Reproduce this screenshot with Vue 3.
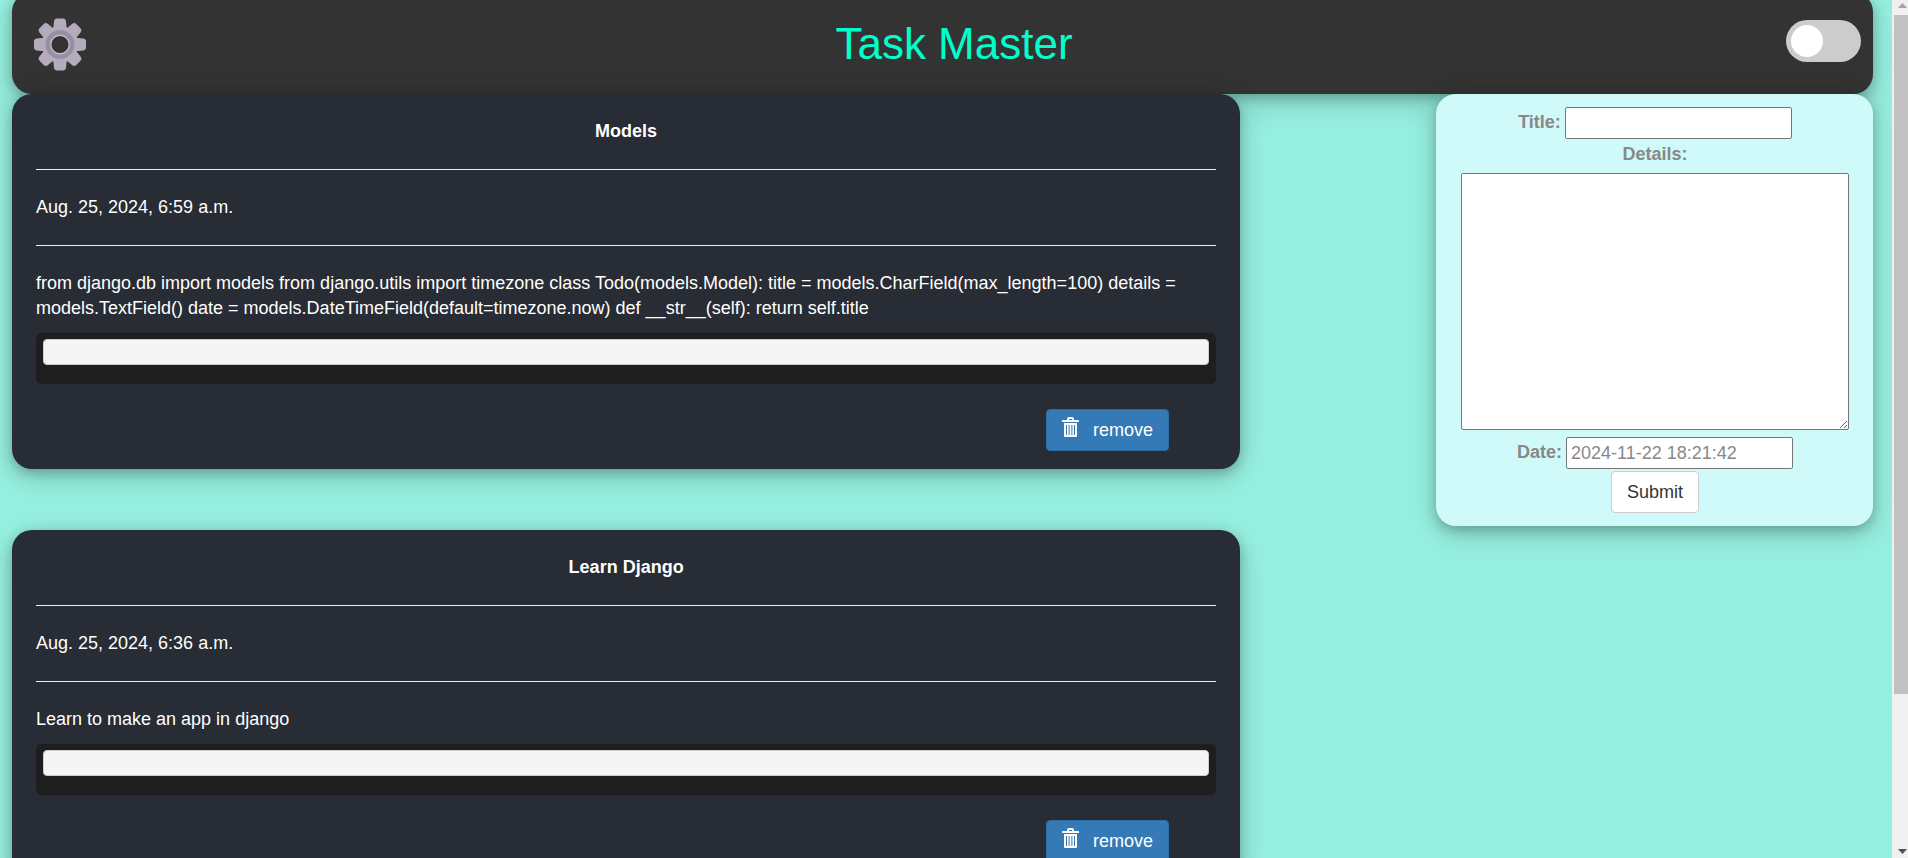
<script setup>
import { ref } from 'vue'

const todos = [
  {
    title: 'Models',
    date: 'Aug. 25, 2024, 6:59 a.m.',
    details:
      'from django.db import models from django.utils import timezone class Todo(models.Model): title = models.CharField(max_length=100) details = models.TextField() date = models.DateTimeField(default=timezone.now) def __str__(self): return self.title',
  },
  {
    title: 'Learn Django',
    date: 'Aug. 25, 2024, 6:36 a.m.',
    details: 'Learn to make an app in django',
  },
]
const teeth = [0, 45, 90, 135, 180, 225, 270, 315]
const light = ref(false)
const title = ref('')
const details = ref('')
const date = ref('2024-11-22 18:21:42')
</script>

<template>
  <div class="window">
    <div class="page">
      <header class="topbar">
        <div class="settings">
          <button class="gear" type="button" aria-label="Settings">
            <svg width="52" height="53" viewBox="-26 -26.500 52 53" aria-hidden="true">
              <g fill="#b4abbc">
                <path
                  v-for="a in teeth"
                  :key="a"
                  :transform="`rotate(${a})`"
                  d="M-7 -14 L-6 -23 Q-5.600 -26 -3 -26 H3 Q5.600 -26 6 -23 L7 -14 Z"
                />
              </g>
              <circle r="14" fill="none" stroke="#b4abbc" stroke-width="8" />
              <circle r="12" fill="none" stroke="#998fa5" stroke-width="5" />
              <circle r="9.300" fill="none" stroke="#c6bbd0" stroke-width="1.400" />
            </svg>
          </button>
        </div>
        <h1>Task Master</h1>
        <label class="switch">
          <input v-model="light" type="checkbox" aria-label="Switch theme" />
          <span class="slider"></span>
        </label>
      </header>

      <div class="columns">
        <main class="todos">
          <article v-for="t in todos" :key="t.title" class="card">
            <h2>{{ t.title }}</h2>
            <hr />
            <p>{{ t.date }}</p>
            <hr />
            <p>{{ t.details }}</p>
            <div class="code"><pre></pre></div>
            <div class="actions">
              <button class="btn primary" type="button">
                <svg width="17" height="20" viewBox="0 0 17 20" aria-hidden="true">
                  <path
                    fill="#fff"
                    fill-rule="evenodd"
                    d="M0 5 V4 Q0 3 1 3 H5 V2 Q5 0 7 0 H10 Q12 0 12 2 V3 H16 Q17 3 17 4 V5 Z M7 2 V3 H10 V2 Z M2 6 H15 V19 Q15 20 14 20 H3 Q2 20 2 19 Z M4 8 V18 H5 V8 Z M6.600 8 V18 H7.600 V8 Z M9.400 8 V18 H10.400 V8 Z M12 8 V18 H13 V8 Z"
                  />
                </svg>
                remove
              </button>
            </div>
          </article>
        </main>

        <form class="entry" @submit.prevent>
          <div class="row">
            <label for="title">Title:</label>
            <input id="title" v-model="title" type="text" />
          </div>
          <label for="details">Details:</label>
          <textarea id="details" v-model="details"></textarea>
          <div class="row">
            <label for="date">Date:</label>
            <input id="date" v-model="date" type="text" />
          </div>
          <button class="btn" type="submit">Submit</button>
        </form>
      </div>
    </div>

    <div class="scrollbar" aria-hidden="true">
      <svg width="14" height="15" viewBox="0 0 14 15"><path d="M4 8 L8.500 3 L13 8 Z" fill="#a3a3a3" /></svg>
      <div class="track"><div class="thumb"></div></div>
      <svg width="14" height="15" viewBox="0 0 14 15"><path d="M4 6 L8.500 11 L13 6 Z" fill="#505050" /></svg>
    </div>
  </div>
</template>

<style>
body {
  background: #96f0e0;
  overflow: hidden;
}
</style>

<style scoped>
* {
  box-sizing: border-box;
}
.window {
  display: flex;
  height: 100vh;
  font: 18px/25px "Liberation Sans", Arial, sans-serif;
}
.page {
  flex: 1;
  overflow: hidden;
  padding: 0 19px 0 12px;
}
.topbar,
.card,
.entry {
  border-radius: 20px;
  box-shadow: 0 4px 12px rgba(0, 0, 0, 0.24), 0 8px 32px rgba(0, 0, 0, 0.18);
}
.topbar {
  display: flex;
  justify-content: space-between;
  align-items: flex-start;
  height: 102px;
  margin-top: -8px;
  padding: 26px 12px 0;
  background: #333;
}
.settings {
  width: 98px;
  padding-left: 10px;
}
.gear {
  display: block;
  padding: 0;
  border: 0;
  background: none;
}
.gear svg {
  display: block;
}
h1 {
  margin: 0;
  font-size: 44px;
  line-height: 52px;
  font-weight: 400;
  color: #00ffcc;
}
.switch {
  display: grid;
  width: 75px;
  height: 42px;
  margin-top: 2px;
}
.switch input,
.slider {
  grid-area: 1 / 1;
  margin: 0;
}
.switch input {
  opacity: 0;
}
.slider {
  padding: 5px;
  border-radius: 21px;
  background: #ccc;
}
.slider::before {
  content: "";
  display: block;
  width: 32px;
  height: 32px;
  border-radius: 50%;
  background: #fff;
}
.switch input:checked + .slider::before {
  margin-left: auto;
}
.columns {
  display: flex;
  justify-content: space-between;
  align-items: flex-start;
}
.todos {
  display: flex;
  flex-direction: column;
  gap: 61px;
  width: 66%;
}
.card {
  padding: 25px 24px 18px;
  background: #282c34;
  color: #fff;
}
h2 {
  margin: 0;
  font-size: 18px;
  line-height: 25px;
  text-align: center;
}
hr {
  height: 1px;
  margin: 25px 0;
  border: 0;
  background: #eee;
}
p {
  margin: 0;
}
.code {
  height: 51px;
  margin: 12px 0 25px;
  padding: 6px 7px;
  border-radius: 5px;
  background: #1e1e1e;
}
pre {
  height: 26px;
  margin: 0;
  border: 1px solid #ccc;
  border-radius: 4px;
  background: #f5f5f5;
}
.actions {
  display: flex;
  justify-content: flex-end;
  padding-right: 4%;
}
.btn {
  padding: 7px 15px;
  border: 1px solid #ccc;
  border-radius: 4px;
  background: #fff;
  color: #333;
  font: 18px/26px "Liberation Sans", Arial, sans-serif;
}
.primary {
  display: flex;
  gap: 14px;
  border-color: #2e6da4;
  background: #337ab7;
  color: #fff;
}
.entry {
  display: flex;
  flex-direction: column;
  align-items: center;
  width: 437px;
  padding: 13px 24px 13px 25px;
  background: #d0f9f9;
  color: #888;
  font-size: 18px;
  line-height: 26px;
}
.entry label {
  font-weight: 700;
}
.row {
  display: flex;
  gap: 4px;
  margin-bottom: 2px;
}
.row label {
  padding-top: 2px;
}
.entry input,
.entry textarea {
  border: 1px solid #767676;
  border-radius: 2px;
  background: #fff;
  color: #888;
  font: 18px/26px "Liberation Sans", Arial, sans-serif;
}
.entry input {
  width: 227px;
  height: 32px;
  padding: 0 4px;
}
.entry textarea {
  width: 100%;
  height: 257px;
  margin: 6px 0 7px;
}
.scrollbar {
  display: flex;
  flex-direction: column;
  width: 16px;
  padding-left: 2px;
  background: #f0f0f0;
}
.scrollbar svg {
  display: block;
}
.track {
  flex: 1;
}
.thumb {
  height: 82%;
  background: #c1c1c1;
}
</style>
